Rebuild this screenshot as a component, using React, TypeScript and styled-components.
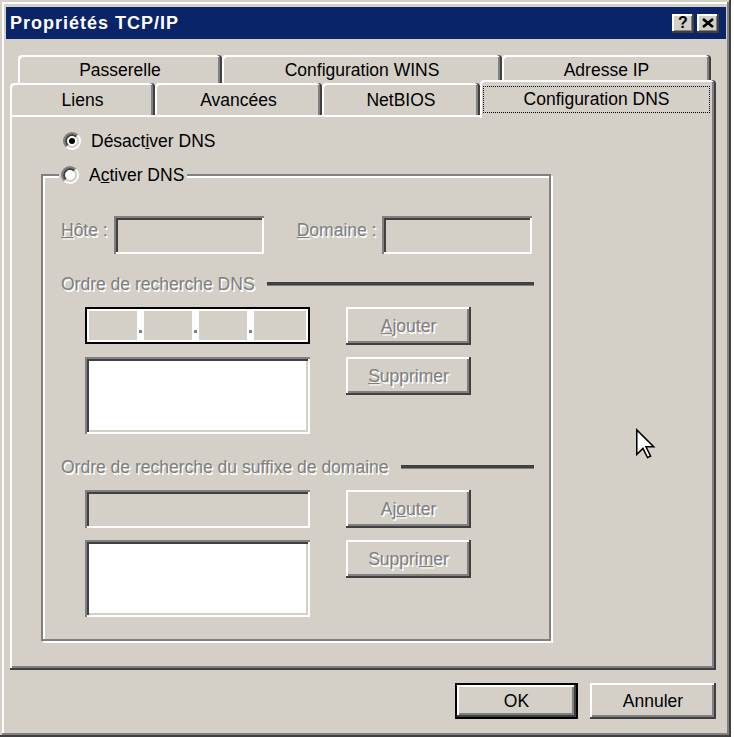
import React from "react";
import styled, { createGlobalStyle } from "styled-components";

const FACE = "#d4d0c8";
const SHADOW = "#808080";
const DARK = "#404040";

const raisedEdge = `
  box-shadow: inset -2px -2px 0 ${DARK}, inset 2px 2px 0 #ffffff,
    inset -4px -4px 0 ${SHADOW};
`;

const sunkenEdge = `
  box-shadow: inset 2px 2px 0 ${SHADOW}, inset -2px -2px 0 #ffffff,
    inset 4px 4px 0 ${DARK}, inset -4px -4px 0 ${FACE};
`;

const GlobalStyle = createGlobalStyle`
  html, body {
    margin: 0;
    padding: 0;
    background: #ffffff;
  }

  body {
    font-family: "Liberation Sans", Arial, sans-serif;
    font-size: 17.5px;
    color: #000000;
  }

  * {
    box-sizing: border-box;
  }
`;

const SWindow = styled.div`
  position: relative;
  width: 731px;
  height: 737px;
  background: ${FACE};
  padding: 7px 5px 0 6px;
  box-shadow: inset -2px -2px 0 ${DARK}, inset 2px 2px 0 ${FACE},
    inset -4px -4px 0 ${SHADOW}, inset 4px 4px 0 #ffffff;
`;

const STitleBar = styled.div`
  height: 32px;
  background: #0a246a;
  display: flex;
  align-items: center;
  padding: 0 7px 0 4px;
`;

const STitleText = styled.span`
  flex: 1;
  color: #ffffff;
  font-weight: 700;
  font-size: 18px;
  letter-spacing: 1px;
`;

const SCaptionButtons = styled.div`
  display: flex;
  gap: 3px;
`;

const SCaptionButton = styled.div`
  width: 22px;
  height: 19px;
  background: ${FACE};
  display: flex;
  align-items: center;
  justify-content: center;
  font-weight: 700;
  font-size: 16px;
  line-height: 1;
  box-shadow: inset -2px -2px 0 ${DARK}, inset 2px 2px 0 #ffffff,
    inset -3px -3px 0 ${SHADOW};
`;

const SBody = styled.div`
  padding: 16px 10px 0 4px;
`;

const STabStrip = styled.div`
  display: flex;
  flex-direction: column;
`;

const STabRow = styled.div<{ $indent: number }>`
  display: flex;
  align-items: flex-end;
  padding-left: ${(p) => p.$indent}px;
`;

const STab = styled.div<{ $width: number; $height: number; $active?: boolean }>`
  width: ${(p) => p.$width}px;
  height: ${(p) => (p.$active ? p.$height + 6 : p.$height)}px;
  margin: ${(p) => (p.$active ? "-3px 0 -3px 0" : "0")};
  position: ${(p) => (p.$active ? "relative" : "static")};
  z-index: ${(p) => (p.$active ? 1 : "auto")};
  background: ${FACE};
  border-radius: 4px 4px 0 0;
  display: flex;
  align-items: ${(p) => (p.$active ? "stretch" : "center")};
  justify-content: center;
  padding-top: 2px;
  box-shadow: inset -2px 0 0 ${DARK}, inset 2px 2px 0 #ffffff,
    inset -4px 0 0 ${SHADOW};
`;

const SFocusRing = styled.span`
  flex: 1;
  margin: 4px 6px 5px 3px;
  border: 1px dotted #000000;
  display: flex;
  align-items: center;
  justify-content: center;
`;

const SPanel = styled.div`
  height: 555px;
  padding: 16px 0 0 31px;
  background: ${FACE};
  ${raisedEdge}
`;

const SRadioRow = styled.label`
  display: flex;
  align-items: center;
  gap: 10px;
  height: 20px;
  margin-left: 22px;
`;

const SRadio = styled.span`
  width: 18px;
  height: 18px;
  border-radius: 50%;
  border: 2px solid;
  border-color: ${SHADOW} #ffffff #ffffff ${SHADOW};
  display: flex;
`;

const SRadioInner = styled.span<{ $checked?: boolean }>`
  flex: 1;
  border-radius: 50%;
  border: 2px solid;
  border-color: ${DARK} ${FACE} ${FACE} ${DARK};
  background: #ffffff;
  display: flex;
  align-items: center;
  justify-content: center;

  &::after {
    content: "";
    width: 6px;
    height: 6px;
    border-radius: 50%;
    background: ${(p) => (p.$checked ? "#000000" : "transparent")};
  }
`;

const SGroupFrame = styled.div`
  position: relative;
  width: 510px;
  margin-top: 23px;
  border: 2px solid ${SHADOW};
  box-shadow: inset 2px 2px 0 #ffffff, 2px 2px 0 #ffffff;
  padding: 40px 15px 22px 18px;
`;

const SLegend = styled.label`
  position: absolute;
  top: -11px;
  left: 16px;
  height: 20px;
  padding: 0 3px 0 2px;
  background: ${FACE};
  display: flex;
  align-items: center;
  gap: 10px;
`;

const SDisabledText = styled.span`
  color: ${SHADOW};
  text-shadow: 1.5px 1.5px 0 #ffffff;
`;

const SHostRow = styled.div`
  display: flex;
  align-items: flex-start;
`;

const SFieldLabel = styled(SDisabledText)<{ $gapBefore?: number }>`
  line-height: 20px;
  margin: 4px 6px 0 ${(p) => p.$gapBefore || 0}px;
`;

const STextField = styled.div<{ $width?: number }>`
  width: ${(p) => (p.$width ? `${p.$width}px` : "auto")};
  height: 38px;
  background: ${FACE};
  ${sunkenEdge}
`;

const SListBox = styled.div`
  height: 77px;
  background: #ffffff;
  ${sunkenEdge}
`;

const SSection = styled.div<{ $top: number }>`
  margin-top: ${(p) => p.$top}px;
`;

const SSectionHeader = styled.div`
  display: flex;
  align-items: center;
  gap: 12px;
  height: 20px;
`;

const SHeaderLine = styled.span`
  flex: 1;
  height: 4px;
  border-top: 3px solid ${DARK};
  background: ${SHADOW};
`;

const SEditor = styled.div`
  display: grid;
  grid-template-columns: 225px 125px;
  column-gap: 36px;
  row-gap: 12px;
  align-items: start;
  margin: 13px 0 0 24px;
`;

const SIpField = styled.div`
  height: 37px;
  border: 2px solid #000000;
  padding: 2px;
  background: #ffffff;
  display: grid;
  grid-template-columns: 48px 7px 48px 7px 48px 7px 1fr;
`;

const SIpSegment = styled.span`
  background: ${FACE};
`;

const SIpDot = styled.span`
  display: flex;
  justify-content: center;
  padding-top: 19px;

  &::after {
    content: "";
    width: 3px;
    height: 3px;
    background: ${SHADOW};
  }
`;

const SButton = styled.button<{ $width: number; $height?: number; $default?: boolean }>`
  width: ${(p) => p.$width}px;
  height: ${(p) => p.$height || 38}px;
  padding: 0;
  background: ${FACE};
  font: inherit;
  color: #000000;
  border: ${(p) => (p.$default ? "2px solid #000000" : "none")};
  display: flex;
  align-items: center;
  justify-content: center;
  ${raisedEdge}

  &:disabled {
    color: ${SHADOW};
    text-shadow: 1.5px 1.5px 0 #ffffff;
  }
`;

const SFooter = styled.div`
  display: flex;
  justify-content: flex-end;
  gap: 12px;
  margin-top: 13px;
`;

const SKey = styled.span`
  text-decoration: underline;
`;

const SCursor = styled.svg`
  position: absolute;
  left: 636px;
  top: 428px;
`;

const Radio = ({ checked }: { checked?: boolean }) => (
  <SRadio>
    <SRadioInner $checked={checked} />
  </SRadio>
);

const IpAddressField = () => (
  <SIpField>
    <SIpSegment />
    <SIpDot />
    <SIpSegment />
    <SIpDot />
    <SIpSegment />
    <SIpDot />
    <SIpSegment />
  </SIpField>
);

const backTabs = [
  { label: "Passerelle", width: 204 },
  { label: "Configuration WINS", width: 280 },
  { label: "Adresse IP", width: 209 },
];

const frontTabs = [
  { label: "Liens", width: 145 },
  { label: "Avancées", width: 167 },
  { label: "NetBIOS", width: 158 },
  { label: "Configuration DNS", width: 236, active: true },
];

export default function App() {
  return (
    <>
      <GlobalStyle />
      <SWindow>
        <STitleBar>
          <STitleText>Propriétés TCP/IP</STitleText>
          <SCaptionButtons>
            <SCaptionButton>?</SCaptionButton>
            <SCaptionButton>
              <svg width="12" height="10" viewBox="0 0 12 10">
                <path d="M1 1 L11 9 M11 1 L1 9" stroke="#000" strokeWidth="2.6" />
              </svg>
            </SCaptionButton>
          </SCaptionButtons>
        </STitleBar>

        <SBody>
          <STabStrip>
            <STabRow $indent={8}>
              {backTabs.map((tab) => (
                <STab key={tab.label} $width={tab.width} $height={28}>
                  {tab.label}
                </STab>
              ))}
            </STabRow>
            <STabRow $indent={0}>
              {frontTabs.map((tab) =>
                tab.active ? (
                  <STab key={tab.label} $width={tab.width} $height={32} $active>
                    <SFocusRing>{tab.label}</SFocusRing>
                  </STab>
                ) : (
                  <STab key={tab.label} $width={tab.width} $height={32}>
                    {tab.label}
                  </STab>
                )
              )}
            </STabRow>
          </STabStrip>

          <SPanel>
            <SRadioRow>
              <Radio checked />
              <span>
                Désact<SKey>i</SKey>ver DNS
              </span>
            </SRadioRow>

            <SGroupFrame>
              <SLegend>
                <Radio />
                <span>
                  A<SKey>c</SKey>tiver DNS
                </span>
              </SLegend>

              <SHostRow>
                <SFieldLabel>
                  <SKey>H</SKey>ôte :
                </SFieldLabel>
                <STextField $width={150} />
                <SFieldLabel $gapBefore={33}>
                  <SKey>D</SKey>omaine :
                </SFieldLabel>
                <STextField $width={150} />
              </SHostRow>

              <SSection $top={20}>
                <SSectionHeader>
                  <SDisabledText>Ordre de recherche DNS</SDisabledText>
                  <SHeaderLine />
                </SSectionHeader>
                <SEditor>
                  <IpAddressField />
                  <SButton $width={125} disabled>
                    <SKey>A</SKey>jouter
                  </SButton>
                  <SListBox />
                  <SButton $width={125} disabled>
                    <SKey>S</SKey>upprimer
                  </SButton>
                </SEditor>
              </SSection>

              <SSection $top={23}>
                <SSectionHeader>
                  <SDisabledText>Ordre de recherche du suffixe de domaine</SDisabledText>
                  <SHeaderLine />
                </SSectionHeader>
                <SEditor>
                  <STextField />
                  <SButton $width={125} disabled>
                    Aj<SKey>o</SKey>uter
                  </SButton>
                  <SListBox />
                  <SButton $width={125} disabled>
                    Suppri<SKey>m</SKey>er
                  </SButton>
                </SEditor>
              </SSection>
            </SGroupFrame>
          </SPanel>

          <SFooter>
            <SButton $width={123} $height={36} $default>
              OK
            </SButton>
            <SButton $width={126} $height={36}>
              Annuler
            </SButton>
          </SFooter>
        </SBody>

        <SCursor width="20" height="33" viewBox="0 0 13 20">
          <path
            d="M0.5 0.5 L0.5 16.5 L4.5 12.5 L7.5 18.5 L9.5 17.5 L6.5 11.5 L11.5 11.5 Z"
            fill="#ffffff"
            stroke="#000000"
            strokeWidth="1"
            strokeLinejoin="miter"
          />
        </SCursor>
      </SWindow>
    </>
  );
}
